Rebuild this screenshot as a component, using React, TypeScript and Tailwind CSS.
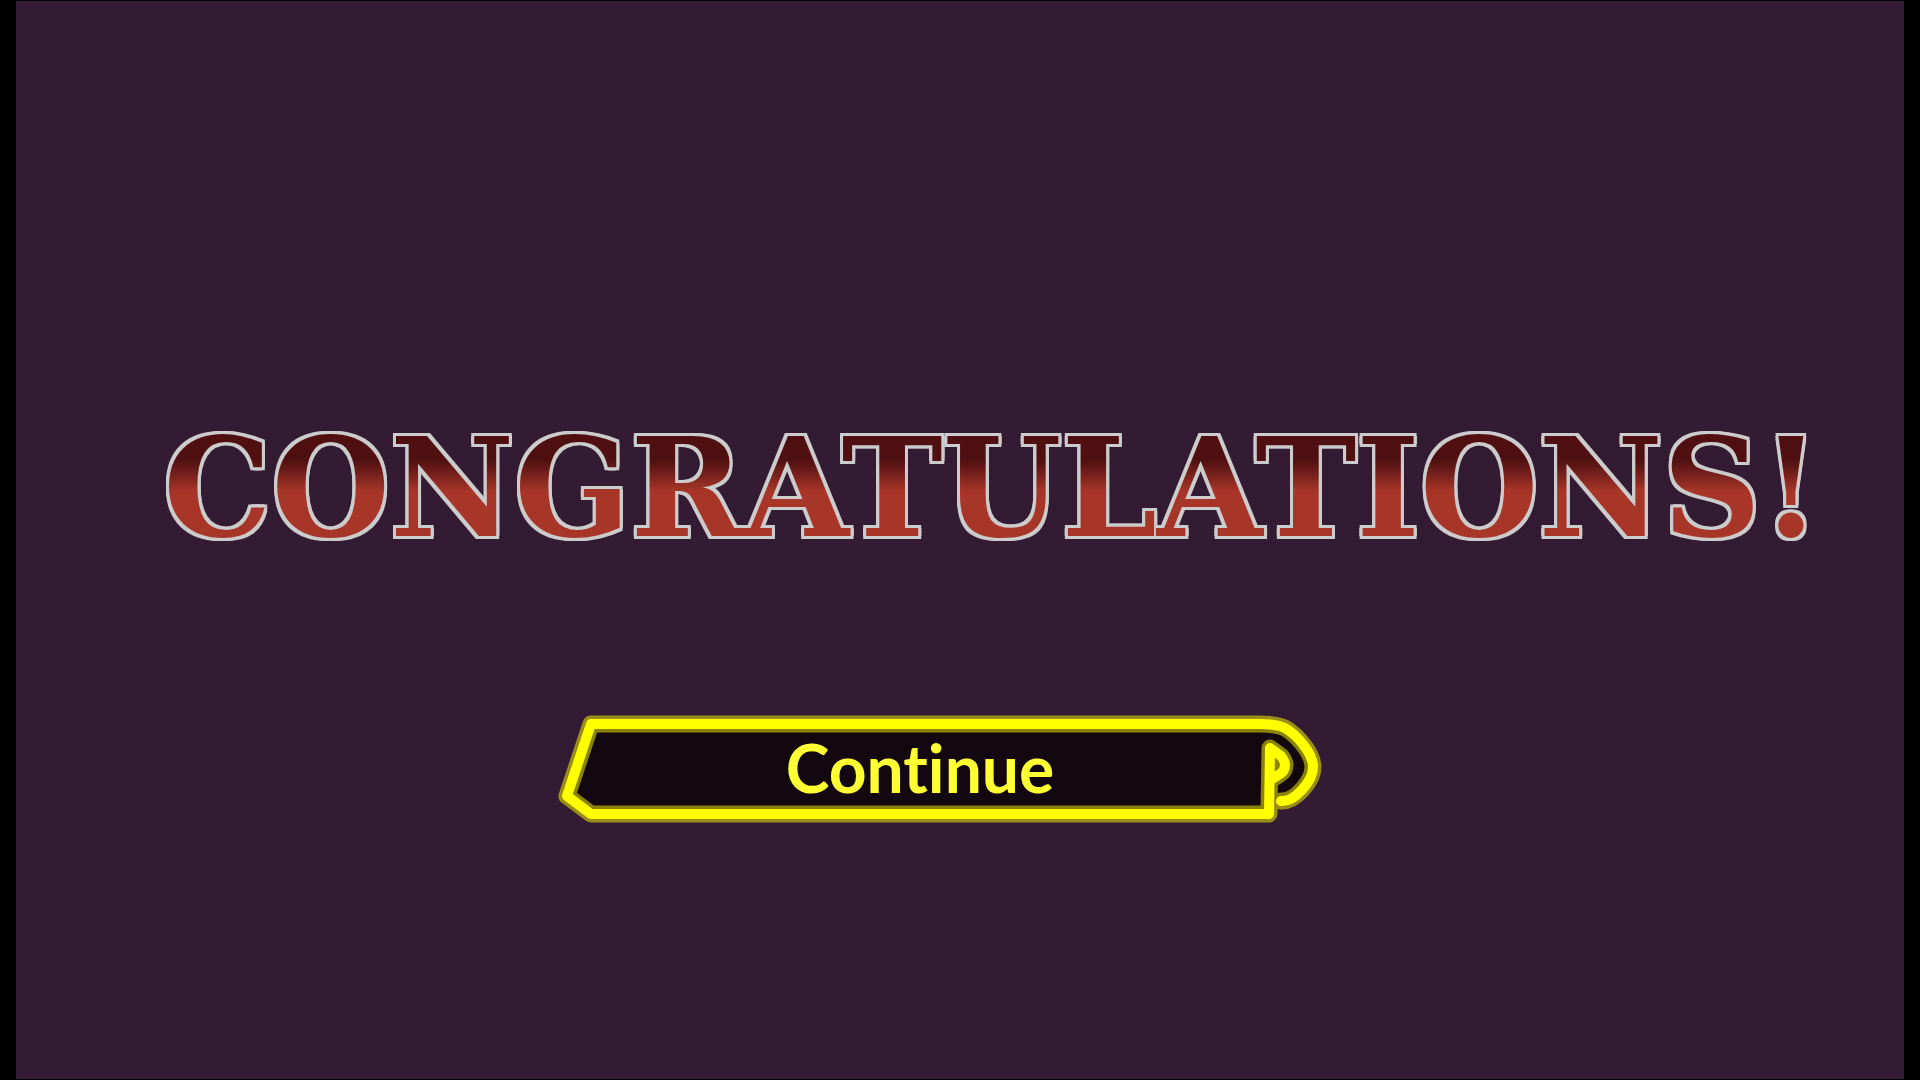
const SHELL = 'M725 89 C739 90 757 69 757 55 C757 41 741 23 729 16 Q721 12 704 12 H35 L11 84 L35 102 H713 L714 36 L725 44 Q729 49 729 53 Q729 59 724 62 L716 67';
const BODY = 'M725 89 C739 90 757 69 757 55 C757 41 741 23 729 16 Q721 12 704 12 H35 L11 84 L35 102 H714 V89 Z';

function ContinueButton() {
  return (
    <button
      type="button"
      className="relative flex h-28 w-192 cursor-pointer items-center justify-center pr-10 font-['Lato',sans-serif] text-[66px] leading-none font-bold text-[#ffff33] [font-variant-ligatures:none]"
    >
      <svg
        aria-hidden="true"
        viewBox="0 0 768 112"
        className="absolute inset-0 h-full w-full"
        fill="none"
        strokeLinecap="round"
        strokeLinejoin="round"
      >
        <path d={BODY} fill="#13080f" />
        <path d={SHELL} stroke="#ffff00" strokeOpacity="0.5" strokeWidth="17" />
        <path d={SHELL} stroke="#ffff00" strokeWidth="10" />
      </svg>
      <span className="relative">Continue</span>
    </button>
  );
}

export default function App() {
  return (
    <div className="flex min-h-screen bg-black px-4 py-px">
      <main className="flex flex-1 flex-col items-center gap-38 bg-[#331c33] pt-104">
        <h1 className="ml-16 bg-linear-to-b from-[#501012] from-30% to-[#a83628] to-52% bg-clip-text font-['DejaVu_Serif',serif] text-[136px] leading-[143px] font-bold whitespace-nowrap text-transparent [filter:drop-shadow(3px_0_#cccccc)_drop-shadow(-3px_0_#cccccc)_drop-shadow(0_3px_#cccccc)_drop-shadow(0_-3px_#cccccc)]">
          CONGRATULATIONS!
        </h1>
        <div className="pr-10">
          <ContinueButton />
        </div>
      </main>
    </div>
  );
}
